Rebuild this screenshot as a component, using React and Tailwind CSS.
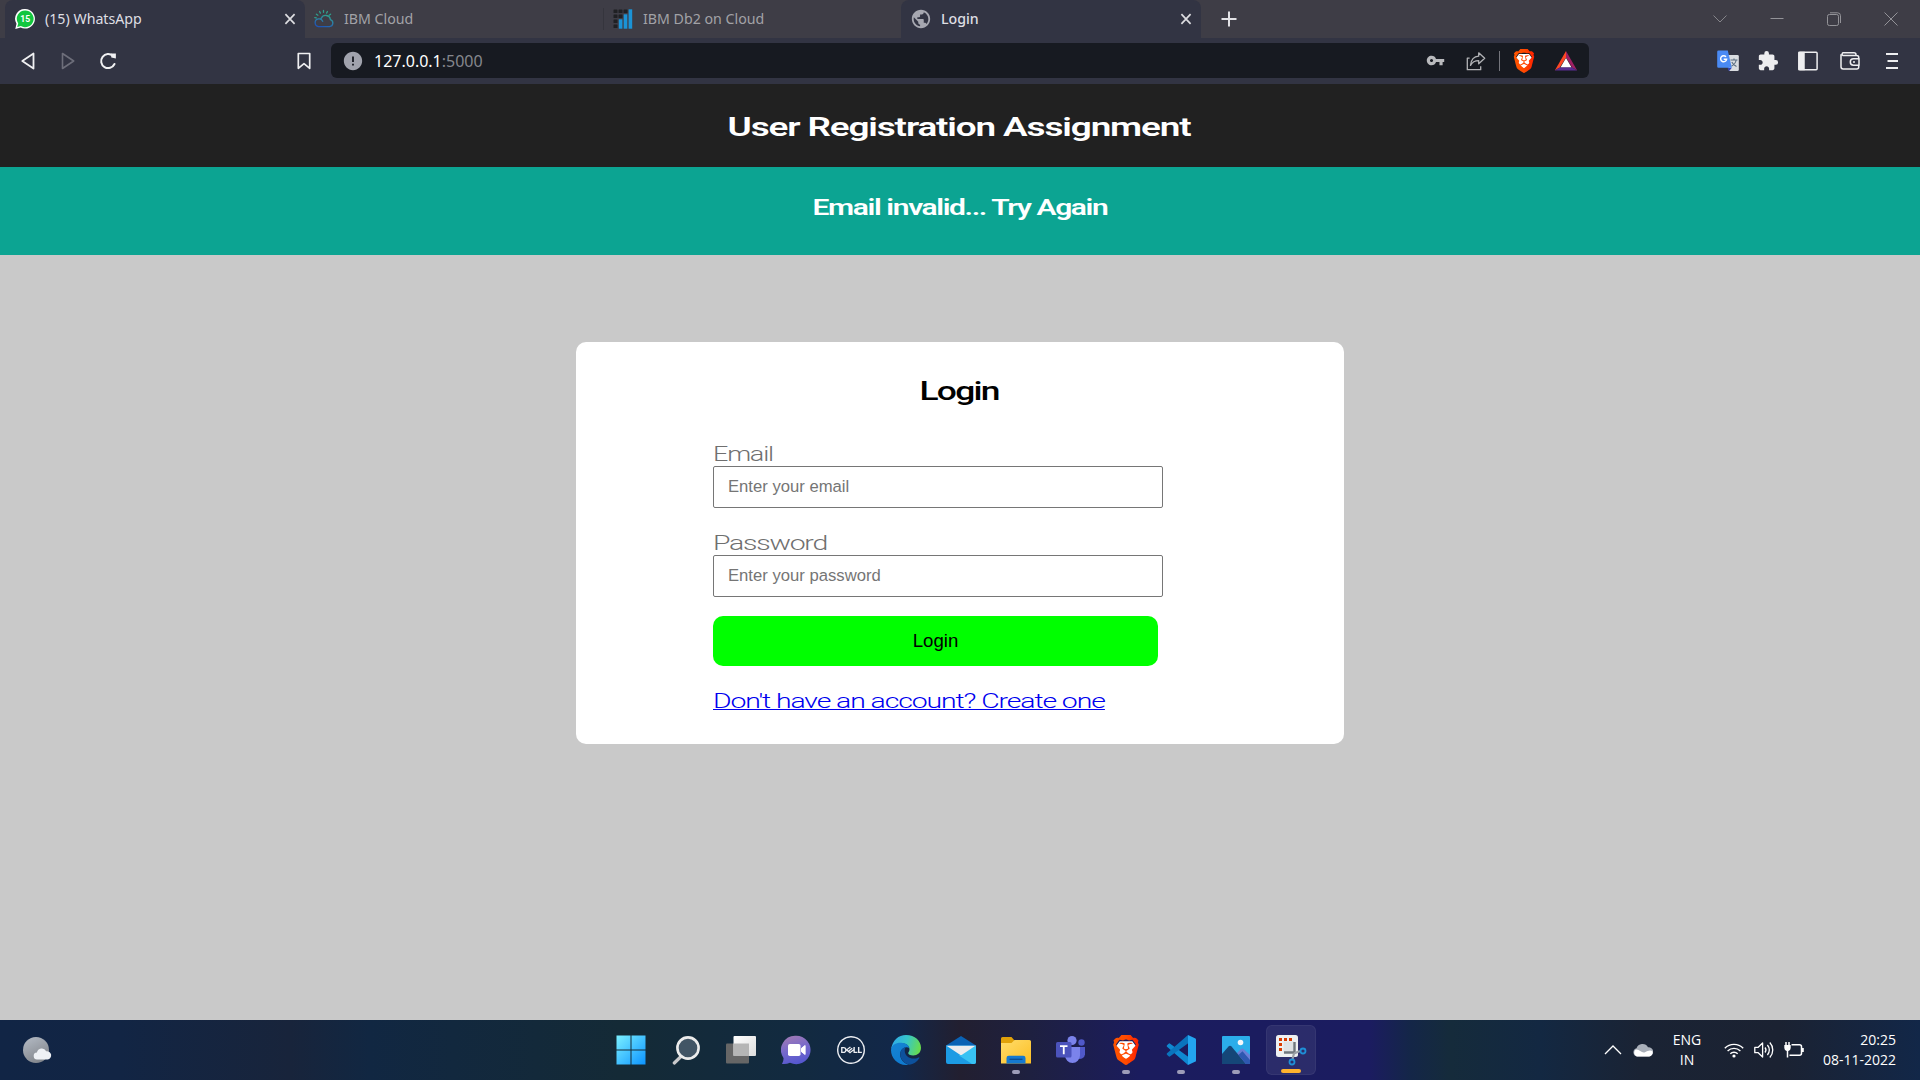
import { MdVpnKey, MdExtension, MdPublic, MdError } from "react-icons/md";
import { SiBrave, SiDell } from "react-icons/si";

/* ---------- shared ---------- */

function Cell({ className = "", children }) {
  return <div className={`flex shrink-0 items-center justify-center ${className}`}>{children}</div>;
}

function BraveLion({ id, className }) {
  return (
    <span className={`relative block ${className}`}>
      <svg viewBox="0 0 24 24" className="h-full w-full">
        <path d="M7 5h10l3 4-2 8-6 5-6-5-2-8z" fill="#fff" />
      </svg>
      <SiBrave className="absolute inset-0 h-full w-full" style={{ fill: `url(#${id})` }} />
      <svg className="absolute h-0 w-0">
        <defs>
          <linearGradient id={id} x1="0" x2="1" y1="0" y2="0">
            <stop offset="0" stopColor="#ff5500" />
            <stop offset="0.5" stopColor="#ff4a00" />
            <stop offset="1" stopColor="#ff2000" />
          </linearGradient>
        </defs>
      </svg>
    </span>
  );
}

/* ---------- browser chrome ---------- */

function WhatsAppIcon() {
  return (
    <svg viewBox="0 0 20 20" className="h-5 w-5">
      <path d="M10.2 0a9.8 9.8 0 1 1-4.6 18.5L0.3 20l1.2-5.2A9.8 9.8 0 0 1 10.2 0z" fill="#fff" />
      <path d="M10.2 1.4a8.4 8.4 0 1 1-4.3 15.6L2.2 18l1-3.6A8.4 8.4 0 0 1 10.2 1.4z" fill="#12c63f" />
      <text x="10.2" y="13.2" textAnchor="middle" fontSize="8.6" fontWeight="700" fill="#fff" fontFamily="Roboto, sans-serif">15</text>
    </svg>
  );
}

function CloudIcon() {
  return (
    <svg viewBox="0 0 20 20" className="h-5 w-5" fill="none" strokeWidth="1.3" strokeLinecap="round">
      <defs>
        <linearGradient id="ibmc" x1="0.8" y1="0" x2="0.3" y2="1">
          <stop offset="0" stopColor="#2fa08c" />
          <stop offset="0.5" stopColor="#2b7fa8" />
          <stop offset="1" stopColor="#1f55b5" />
        </linearGradient>
      </defs>
      <path d="M4.500 17.600h11a3.600 3.600 0 0 0 .9-7A4.800 4.800 0 0 0 7.300 9.200 4.800 4.800 0 0 0 6.500 10.300M4.500 17.600A3.900 3.900 0 1 1 8.700 12.400" stroke="url(#ibmc)" />
      <path d="M9.500 1.500v1.800M5.600 2.500l.8 1.600M13.400 2.500l-.8 1.600M2.400 5.200l1.500 1M16.600 5.200l-1.500 1M.8 8.700l1.500.2" stroke="#2fa08c" />
    </svg>
  );
}

function Db2Icon() {
  return (
    <svg viewBox="0 0 20 20" className="h-5 w-5">
      <g fill="#1f2023">
        {[[0.5, 0.5], [5.5, 0.5], [10.5, 0.5], [0.5, 5.5], [5.5, 5.5], [0.5, 10.5], [0.5, 15.5]].map(([x, y]) => (
          <rect key={`${x}-${y}`} x={x} y={y} width="4" height="3.6" rx="0.6" />
        ))}
      </g>
      <g fill="#1b93d6">
        <rect x="5.8" y="10.3" width="3.6" height="9.4" />
        <rect x="10.7" y="5.3" width="3.6" height="14.4" />
        <rect x="15.6" y="0.3" width="3.6" height="19.4" />
      </g>
    </svg>
  );
}

function CloseMark() {
  return (
    <svg viewBox="0 0 12 12" className="h-3 w-3" stroke="#dcdce0" strokeWidth="1.7">
      <path d="M1.4 1.200l9.200 9.600M10.600 1.200L1.400 10.800" />
    </svg>
  );
}

function Tab({ icon, title, active, closable, width, pad = "pl-2.5" }) {
  return (
    <div className={`flex h-[38px] shrink-0 items-center pr-[9px] ${pad} ${width} ${active ? "rounded-t-lg bg-[#323443]" : ""}`}>
      <span className="flex h-5 w-5 items-center justify-center">{icon}</span>
      <span className={`ml-2.5 flex-1 text-[14.2px] leading-5 ${active ? "text-[#dfdfe3]" : "text-[#a2a2a7]"}`}>{title}</span>
      {closable && <CloseMark />}
    </div>
  );
}

function TabStrip() {
  return (
    <div className="flex h-[38px] bg-[#3e3d46] pl-[5px]">
      <Tab width="w-[300px]" icon={<WhatsAppIcon />} title="(15) WhatsApp" active closable />
      <Tab width="w-[298px]" pad="pl-[9px]" icon={<CloudIcon />} title="IBM Cloud" />
      <div className="my-2 w-px bg-[#35353d]" />
      <Tab width="w-[297px]" pad="pl-[9px]" icon={<Db2Icon />} title="IBM Db2 on Cloud" />
      <Tab
        width="w-[300px]"
        icon={<MdPublic className="h-[22px] w-[22px] shrink-0 text-[#a6a7b0]" />}
        title={<span className="font-medium">Login</span>}
        active
        closable
      />
      <Cell className="w-14">
        <svg viewBox="0 0 16 16" className="h-4 w-4" stroke="#e2e2e6" strokeWidth="2">
          <path d="M8 .5v15M.5 8h15" />
        </svg>
      </Cell>
      <div className="ml-auto flex pr-px">
        <Cell className="w-[57px]">
          <svg viewBox="0 0 14 14" className="h-3.5 w-3.5" fill="none" stroke="#85858a"><path d="M.5 3.500L7 10l6.500-6.500" /></svg>
        </Cell>
        <Cell className="w-[57px]">
          <svg viewBox="0 0 14 14" className="h-3.5 w-3.5" stroke="#939398"><path d="M.5 6.500h13" /></svg>
        </Cell>
        <Cell className="w-[57px]">
          <svg viewBox="0 0 14 14" className="h-3.5 w-3.5" fill="none" stroke="#939398">
            <rect x="0.5" y="2.5" width="11" height="11" rx="1.8" />
            <path d="M3 .8h7.500a3 3 0 0 1 3 3V11" />
          </svg>
        </Cell>
        <Cell className="w-[57px]">
          <svg viewBox="0 0 14 14" className="h-3.5 w-3.5" stroke="#939398"><path d="M.5.500l13 13M13.500.500l-13 13" /></svg>
        </Cell>
      </div>
    </div>
  );
}

function AddressBar() {
  return (
    <div className="flex h-[35px] w-[1258px] shrink-0 items-center rounded-md bg-[#171a21]">
      <Cell className="ml-3 w-5"><MdError className="h-[22px] w-[22px] shrink-0 text-[#a1a3ad]" /></Cell>
      <span className="ml-[11px] text-[16px] leading-6 text-white">
        127.0.0.1<span className="text-[#85878d]">:5000</span>
      </span>
      <div className="ml-auto flex items-center">
        <Cell className="mr-px w-10"><MdVpnKey className="h-[19px] w-[19px] text-[#b9babd]" /></Cell>
        <Cell className="w-10">
          <svg viewBox="0 0 20 20" className="h-5 w-5" fill="none" stroke="#b2b3b6" strokeWidth="1.3" strokeLinejoin="round">
            <path d="M3.600 7.200H1.300v11.500h13.400v-3.400" />
            <path d="M12.700 1.800l6 5.500-6 5.400V9.600c-4 0-6.400 1.300-8.200 4.800.5-5 3.300-8.900 8.200-9.200z" />
          </svg>
        </Cell>
        <div className="ml-[3px] h-5 w-px bg-[#74757c]" />
        <Cell className="ml-1 w-10"><BraveLion id="brave-bar" className="h-6 w-6" /></Cell>
        <Cell className="mr-[3px] ml-[2px] w-10">
          <svg viewBox="0 0 24 20" className="h-5 w-6">
            <path d="M12 0L.8 19.500 6 16.200 12 6.500z" fill="#ff4724" />
            <path d="M12 0l11.200 19.500L18 16.200 12 6.500z" fill="#9e1f63" />
            <path d="M.8 19.500h22.400L18 16.200H6z" fill="#5a2d91" />
            <path d="M12 7l5.400 9.200H6.600z" fill="#fff" />
          </svg>
        </Cell>
      </div>
    </div>
  );
}

function Toolbar() {
  return (
    <div className="flex h-[46px] items-center bg-[#323443] pb-px">
      <Cell className="ml-2 w-10">
        <svg viewBox="0 0 16 18" className="h-[18px] w-4" fill="none" stroke="#f0f0f2" strokeWidth="1.8" strokeLinejoin="round"><path d="M13.500 1.500v15L2.300 9z" /></svg>
      </Cell>
      <Cell className="w-10">
        <svg viewBox="0 0 16 18" className="h-[18px] w-4" fill="none" stroke="#6d6e7a" strokeWidth="1.6" strokeLinejoin="round"><path d="M2.500 1.500v15L13.700 9z" /></svg>
      </Cell>
      <Cell className="w-10">
        <svg viewBox="0 0 18 18" className="h-[18px] w-[18px]" fill="none" stroke="#f0f0f2" strokeWidth="2" strokeLinecap="round">
          <path d="M15.500 12A7 7 0 1 1 14 4" />
          <path d="M12 1.600h4.900v4.900l-4.600-.9z" fill="#f0f0f2" stroke="none" />
        </svg>
      </Cell>
      <Cell className="mr-[7px] ml-auto w-10 flex-none">
        <svg viewBox="0 0 14 18" className="h-[18px] w-3.5" fill="none" stroke="#f0f0f2" strokeWidth="1.7" strokeLinejoin="round"><path d="M1.300 1.500h11.400v14.800L7 11.700l-5.700 4.600z" /></svg>
      </Cell>
      <AddressBar />
      <div className="flex w-[331px] shrink-0 items-center pl-[119px]">
        <Cell className="w-10">
          <svg viewBox="0 0 22 22" className="h-[22px] w-[22px]">
            <path d="M10 5h10.500a1.300 1.300 0 0 1 1.300 1.300v13.500a1.300 1.300 0 0 1-1.300 1.300H12z" fill="#d9dce0" />
            <path d="M13.500 10h7M17 8.500V10M19.200 10c-.6 3-2.500 5-4.800 6.200M14.800 12c1 2 2.500 3.500 4.700 4.400" stroke="#5a6d80" strokeWidth="1.100" fill="none" />
            <path d="M10.500 17.800h4.300L12 21.200z" fill="#3040b5" />
            <path d="M1.500.5h9.300l4 17.300H1.500A1.300 1.300 0 0 1 .2 16.500V1.800A1.300 1.300 0 0 1 1.500.5z" fill="#4a8af4" />
            <path d="M9 6.900A3 3 0 1 0 9.600 9.300H6.700" fill="none" stroke="#fff" strokeWidth="1.400" />
          </svg>
        </Cell>
        <Cell className="w-10"><MdExtension className="h-[22px] w-[22px] text-[#eeeef0]" /></Cell>
        <Cell className="w-10">
          <svg viewBox="0 0 20 20" className="h-5 w-5" fill="none" stroke="#eeeef0" strokeWidth="1.500">
            <rect x=".9" y="1.200" width="18.200" height="17.600" rx="1" />
            <path d="M1 1.500h5v17H1z" fill="#eeeef0" />
          </svg>
        </Cell>
        <Cell className="ml-px w-[42px]">
          <svg viewBox="0 0 20 18" className="h-[18px] w-5" fill="none" stroke="#eeeef0" strokeWidth="1.500" strokeLinejoin="round">
            <path d="M18.700 6.800V5.500a2 2 0 0 0-2-2H2.800a1.700 1.700 0 0 1 0-2.700H14a2 2 0 0 1 2 2v.6M1 2.200v12.600a2.200 2.200 0 0 0 2.200 2.200h13.500a2 2 0 0 0 2-2v-1.600" />
            <path d="M19 6.800h-5.500a3.200 3.200 0 0 0 0 6.400H19zM13 10h2" />
          </svg>
        </Cell>
        <Cell className="w-[42px]">
          <svg viewBox="0 0 12 18" className="h-[18px] w-3" stroke="#eeeef0" strokeWidth="1.800"><path d="M0 2h12M1.500 9H12M0 16h12" /></svg>
        </Cell>
      </div>
    </div>
  );
}

/* ---------- web page ---------- */

const wide = "block whitespace-nowrap font-['Roboto',sans-serif]";

function Field({ label, children }) {
  return (
    <div className="flex flex-col">
      <label className="flex h-6 text-[20px] leading-6 font-light text-[#6f6f6f]">{label}</label>
      {children}
    </div>
  );
}

const inputClass =
  "h-[42px] w-[450px] rounded-[2px] border border-[#767676] bg-white px-[14px] pb-px font-['Liberation_Sans',Arial,sans-serif] text-[16.67px] placeholder:text-[#757575] outline-none";

function Page() {
  return (
    <main className="flex flex-1 flex-col items-center bg-[#c9c9c9]">
      <header className="flex h-[83px] w-full justify-center bg-[#212121] pt-[27px] pr-0.5 leading-8 text-white">
        <h1 className={`${wide} origin-center scale-x-[1.42] text-[26px] font-semibold tracking-[-0.8px]`}>User Registration Assignment</h1>
      </header>
      <div className="flex h-[88px] w-full justify-center bg-[#0ca492] pt-[27px] leading-7 text-white">
        <h2 className={`${wide} origin-center scale-x-[1.365] text-[22px] font-semibold tracking-[-1.03px]`}>Email invalid... Try Again</h2>
      </div>
      <form className="mt-[87px] h-[402px] w-[768px] rounded-[10px] bg-white pt-[33px]" onSubmit={(e) => e.preventDefault()}>
        <div className="flex justify-center pr-0.5 leading-8 text-black">
          <h2 className={`${wide} origin-center scale-x-[1.36] text-[26px] font-medium tracking-[-1.3px]`}>Login</h2>
        </div>
        <div className="mt-[35px] ml-[137px] flex flex-col items-start">
          <Field label={<span className={`${wide} origin-left scale-x-[1.35] tracking-[-0.9px]`}>Email</span>}>
            <input type="text" placeholder="Enter your email" className={inputClass} />
          </Field>
          <div className="h-[23px]" />
          <Field label={<span className={`${wide} origin-left scale-x-[1.42] tracking-[-0.86px]`}>Password</span>}>
            <input type="password" placeholder="Enter your password" className={inputClass} />
          </Field>
          <button className="mt-[19px] h-[50px] w-[445px] rounded-[10px] bg-[#00ff00] pb-px font-['Liberation_Sans',Arial,sans-serif] text-[18.67px] text-black">Login</button>
          <a href="#create" className="mt-[23px] flex h-6 items-start text-[20px] leading-6 font-light text-[#0000ee]">
            <span className={`${wide} h-[21px] origin-left scale-x-[1.42] border-b border-[#0000ee] tracking-[-0.78px]`}>Don't have an account? Create one</span>
          </a>
        </div>
      </form>
    </main>
  );
}

/* ---------- taskbar ---------- */

const WindowsIcon = () => (
  <svg viewBox="0 0 30 30" className="h-[30px] w-[30px]">
    <defs>
      <linearGradient id="win" x1="0" y1="0" x2="30" y2="30" gradientUnits="userSpaceOnUse">
        <stop offset="0" stopColor="#7df2ff" />
        <stop offset="1" stopColor="#0a92ff" />
      </linearGradient>
    </defs>
    <path d="M.500.500h14v14h-14zM15.500.500h14v14h-14zM.500 15.500h14v14h-14zM15.500 15.500h14v14h-14z" fill="url(#win)" />
  </svg>
);

const SearchIcon = () => (
  <svg viewBox="0 0 30 30" className="h-[30px] w-[30px]">
    <path d="M10 21.500L3.300 28" stroke="#c9c9cb" strokeWidth="3.200" strokeLinecap="round" />
    <circle cx="17" cy="13" r="10.600" fill="#425565" stroke="#ececec" strokeWidth="2.600" />
  </svg>
);

const TaskViewIcon = () => (
  <svg viewBox="0 0 30 30" className="h-[30px] w-[30px]">
    <defs>
      <linearGradient id="tv" x1="0" y1="0" x2="1" y2="1"><stop offset="0" stopColor="#fff" /><stop offset="1" stopColor="#dcdcdc" /></linearGradient>
    </defs>
    <rect x="0" y="8.500" width="23" height="20" rx="1" fill="#666" />
    <rect x="7.500" y="1" width="22.500" height="20" rx="1" fill="url(#tv)" />
    <rect x="7.500" y="8.500" width="15.500" height="12.500" fill="#b5b5b5" />
  </svg>
);

const ChatIcon = () => (
  <svg viewBox="0 0 30 30" className="h-[30px] w-[30px]">
    <defs>
      <linearGradient id="ch" x1="0.200" y1="0" x2="0.500" y2="1"><stop offset="0" stopColor="#a27ab4" /><stop offset="0.500" stopColor="#7669cb" /><stop offset="1" stopColor="#5557cf" /></linearGradient>
    </defs>
    <path d="M15 .8a14.200 14.200 0 1 1-6 26.900Q5.500 29.500 1 29q1.800-3 1.500-6A14.200 14.200 0 0 1 15 .8z" fill="url(#ch)" />
    <rect x="7" y="9" width="12.500" height="12" rx="1.800" fill="#fff" />
    <path d="M20.500 13.200l3.600-2.700v9l-3.600-2.700z" fill="#fff" stroke="#fff" strokeLinejoin="round" />
  </svg>
);

const EdgeIcon = () => (
  <svg viewBox="0 0 30 30" className="h-[30px] w-[30px]">
    <defs>
      <linearGradient id="e1" x1="0" y1="0.300" x2="1" y2="0.500"><stop offset="0" stopColor="#2fa8ea" /><stop offset="0.500" stopColor="#36c6c9" /><stop offset="1" stopColor="#68dc4d" /></linearGradient>
      <linearGradient id="e2" x1="0" y1="0" x2="0.500" y2="1"><stop offset="0" stopColor="#1584d3" /><stop offset="1" stopColor="#0f7bd0" /></linearGradient>
    </defs>
    <path d="M0 14.500C1.500 5 7.500 0 15 0c9 0 15 6 15 12.800 0 5-3.700 7.700-7.800 7.700-3.200 0-5-1.200-5-2.400 0-.8 1.300-1.500 1.300-3.600 0-3.500-3-6.300-7.500-6.300C5.500 8.200 1.500 11 0 14.500z" fill="url(#e1)" />
    <path d="M0 15C.5 10 5 7.500 10.500 7.800c4 .3 7 2 7.900 5.200-3-1.500-7-.3-8.600 3.300-2.300 5.700 2 12.300 8 13.400C8 31.500 0 24 0 15z" fill="url(#e2)" />
    <path d="M9.800 16.300c1-2.600 3-3.900 5-4-1.700 1.900-1.500 6.600 1.700 9.200 3.200 2.700 7.600 2.600 11 .9.700-.4 1.100.2.800.8-2.300 3.700-6 6-9.800 6.500C12 28.600 7.800 22 9.800 16.300z" fill="#0d519c" />
  </svg>
);

const MailIcon = () => (
  <svg viewBox="0 0 32 30" className="h-[30px] w-8">
    <path d="M1 10.500L16 1l15 9.500v4H1z" fill="#0a62b4" />
    <path d="M1 10.500h30V27a2 2 0 0 1-2 2H3a2 2 0 0 1-2-2z" fill="#1c9be4" />
    <path d="M31 10.500V27a2 2 0 0 1-2 2h-2L14 20.500z" fill="#38c2f3" />
    <path d="M1.500 10.800h29L17 19.700a2 2 0 0 1-2 0z" fill="#ececee" />
  </svg>
);

const FolderIcon = () => (
  <svg viewBox="0 0 30 30" className="h-[30px] w-[30px]">
    <defs>
      <linearGradient id="fo" x1="0" y1="0" x2="1" y2="1"><stop offset="0" stopColor="#ffdc6b" /><stop offset="1" stopColor="#fcbf24" /></linearGradient>
    </defs>
    <path d="M0 3.500A1.500 1.500 0 0 1 1.500 2h9l3 3.500V10H0z" fill="#e0a10a" />
    <path d="M0 8h10.500l3-3H28.500A1.500 1.500 0 0 1 30 6.500V28.500H0z" fill="url(#fo)" />
    <path d="M5.500 28.500V23A2.300 2.300 0 0 1 7.800 20.700h14.400a2.300 2.300 0 0 1 2.300 2.300v5.500z" fill="#1579d0" />
    <path d="M8.500 24.300h13" stroke="#0c4d91" strokeWidth="1.300" />
  </svg>
);

const TeamsIcon = () => (
  <svg viewBox="0 0 30 30" className="h-[30px] w-[30px]">
    <circle cx="25.500" cy="7.500" r="3.200" fill="#5059c9" />
    <circle cx="16" cy="5.500" r="4.600" fill="#7b83eb" />
    <path d="M21 12h8v7.500a5 5 0 0 1-8 3.500z" fill="#5059c9" />
    <path d="M9 12h15v8.500a7.500 7.500 0 0 1-15 0z" fill="#7b83eb" />
    <rect x="0" y="7" width="15.500" height="15.500" rx="1.500" fill="#4b53bc" />
    <path d="M4 11.200h7.500M7.750 11.200v8" stroke="#fff" strokeWidth="1.800" />
  </svg>
);

const CodeIcon = () => (
  <svg viewBox="0 0 30 30" className="h-[30px] w-[30px]">
    <path d="M22 30L1 11.800a1.200 1.200 0 0 1 0-1.600L2.600 8.700a1.200 1.200 0 0 1 1.600 0L22.500 22z" fill="#0f88d1" />
    <path d="M22 0L1 18.200a1.200 1.200 0 0 0 0 1.600l1.600 1.500a1.200 1.200 0 0 0 1.600 0L22.500 8z" fill="#0a74bd" />
    <path d="M22 0l7 3.200a1.500 1.500 0 0 1 1 1.400v20.800a1.500 1.500 0 0 1-1 1.400L22 30z" fill="#23a5f0" />
  </svg>
);

const PhotosIcon = () => (
  <svg viewBox="0 0 30 30" className="h-[30px] w-[30px]">
    <rect x="1" y="1" width="28" height="28" rx="1" fill="#2badea" />
    <path d="M14 20l6-6a2 2 0 0 1 2.500 0L29 20v9H14z" fill="#6a7fd6" />
    <path d="M1 19l6.500-7.500a2 2 0 0 1 3 0L25 29H1z" fill="#154678" />
    <path d="M17.500 20l4-3.700L29 25v4h-4z" fill="#2e58b0" />
    <circle cx="19.500" cy="7.500" r="2.800" fill="#f4f8fb" />
  </svg>
);

const SnipIcon = () => (
  <svg viewBox="0 0 32 32" className="h-8 w-8">
    <rect x="1" y="1" width="22" height="22" rx="2.500" fill="#eef0f1" />
    <path d="M8.500 7.500H19v11.500H8.500z" fill="#dfe2e4" />
    <path d="M9 18.500h10.500V8" fill="none" stroke="#70777d" strokeWidth="2.400" />
    <g fill="#d83b01">
      <path d="M4 4h3v3H4zM9 4h3v3H9zM14 4h3v3h-3zM4 9h3v3H4zM4 14h3v3H4z" />
    </g>
    <path d="M19 19.500l6-2.500M19 19.500L17.500 25" stroke="#9aa0a5" strokeWidth="2.200" />
    <circle cx="28" cy="17" r="2.500" fill="none" stroke="#1f8fd6" strokeWidth="1.800" />
    <circle cx="17" cy="28" r="2.500" fill="none" stroke="#1f8fd6" strokeWidth="1.800" />
  </svg>
);

const apps = [
  { name: "start", icon: <WindowsIcon /> },
  { name: "search", icon: <SearchIcon /> },
  { name: "tasks", icon: <TaskViewIcon /> },
  { name: "chat", icon: <ChatIcon /> },
  { name: "dell", icon: <SiDell className="h-7 w-7 text-[#eceef2]" /> },
  { name: "edge", icon: <EdgeIcon /> },
  { name: "mail", icon: <MailIcon /> },
  { name: "files", icon: <FolderIcon />, mark: "w-2 bg-[#9d9cb8]" },
  { name: "teams", icon: <TeamsIcon /> },
  { name: "brave", icon: <BraveLion id="brave-task" className="h-[30px] w-[30px]" />, mark: "w-2 bg-[#9d9cb8]" },
  { name: "code", icon: <CodeIcon />, mark: "w-2 bg-[#9d9cb8]" },
  { name: "photos", icon: <PhotosIcon />, mark: "w-2 bg-[#9d9cb8]" },
  { name: "snip", icon: <SnipIcon />, mark: "w-5 bg-[#ffb22e]", current: true },
];

function Taskbar() {
  return (
    <footer className="flex h-[60px] items-center bg-[linear-gradient(90deg,#112545_0px,#122544_120px,#18243b_290px,#112742_370px,#142a36_620px,#122a40_800px,#122749_900px,#221f30_960px,#1e2040_1030px,#1b1c5e_1140px,#1b1c60_1370px,#142648_1410px,#152b3b_1450px,#132842_1540px,#1a2334_1640px,#1b2232_1780px,#122748_1920px)] font-['Open_Sans','Noto_Sans',sans-serif] text-white">
      <div className="w-[603px] shrink-0 pl-[22px]">
        <svg viewBox="0 0 30 28" className="h-7 w-[30px]">
          <defs>
            <linearGradient id="moon" x1="0" y1="0" x2="0.500" y2="1"><stop offset="0" stopColor="#b5bcc6" /><stop offset="1" stopColor="#84888e" /></linearGradient>
          </defs>
          <circle cx="14" cy="14" r="13" fill="url(#moon)" />
          <path d="M15.500 23.500a3.500 3.500 0 0 1-.6-7 5 5 0 0 1 9.300-1.300 4.200 4.200 0 0 1 1.500 8.300z" fill="#eef1f5" />
        </svg>
      </div>
      <div className="flex">
        {apps.map((a) => (
          <div key={a.name} className="flex h-[60px] w-[55px] items-center justify-center">
            <div className={`relative flex h-[50px] w-[50px] items-center justify-center rounded-md ${a.current ? "border border-white/5 bg-white/[0.07]" : ""}`}>
              {a.icon}
              {a.mark && <span className={`absolute bottom-px left-1/2 h-1 -translate-x-1/2 rounded-full ${a.mark}`} />}
            </div>
          </div>
        ))}
      </div>
      <div className="ml-auto flex items-center">
        <Cell className="w-8">
          <svg viewBox="0 0 18 10" className="h-2.5 w-[18px]" fill="none" stroke="#fff" strokeWidth="1.300"><path d="M1 9l8-8 8 8" /></svg>
        </Cell>
        <Cell className="w-7">
          <svg viewBox="0 0 20 14" className="h-3.5 w-5">
            <path d="M4 13.500A4.200 4.200 0 0 1 3.500 5.300 6.300 6.300 0 0 1 15 4.200a4.500 4.500 0 0 1 1 9.300z" fill="#a9afb9" />
            <path d="M3.800 13.500A4 4 0 0 1 2.500 6.800C6 5.500 9 11 12 9.200c3-1.600 5.500-2.500 7.600-.7a4.300 4.300 0 0 1-3.400 5z" fill="#fff" />
          </svg>
        </Cell>
        <div className="w-[60px] text-center text-[14px] leading-5">ENG<br />IN</div>
        <Cell className="ml-[2px] w-[30px]">
          <svg viewBox="0 0 20 16" className="h-4 w-5" fill="none" stroke="#fff" strokeWidth="1.400">
            <path d="M.8 6.200a13 13 0 0 1 18.400 0M3.600 9a9 9 0 0 1 12.800 0M6.300 11.800a5.200 5.200 0 0 1 7.400 0" />
            <circle cx="10" cy="14" r="1.600" fill="#fff" stroke="none" />
          </svg>
        </Cell>
        <Cell className="w-[30px]">
          <svg viewBox="0 0 20 18" className="h-[18px] w-5" fill="none" stroke="#fff" strokeWidth="1.300" strokeLinejoin="round">
            <path d="M.8 6.300h3.400L8.600 2v14l-4.400-4.300H.8z" />
            <path d="M11 6.500a4 4 0 0 1 0 5M13.400 4a7.500 7.500 0 0 1 0 10M15.800 1.500a11 11 0 0 1 0 15" />
          </svg>
        </Cell>
        <Cell className="w-[30px]">
          <svg viewBox="0 0 20 16" className="h-4 w-5" fill="none" stroke="#fff" strokeWidth="1.500">
            <path d="M7.500 2.800h8A2 2 0 0 1 17.500 4.800v6.400a2 2 0 0 1-2 2H5.500" />
            <path d="M18.800 6v4" strokeWidth="2" />
            <path d="M.3 3h6.400v3a3.200 3.200 0 0 1-2.400 3H2.700A3.200 3.200 0 0 1 .3 6z" fill="#fff" stroke="none" />
            <path d="M2 0v3M5 0v3M3.500 8v7.500" />
          </svg>
        </Cell>
        <div className="mr-6 ml-[15px] w-[72px] text-right text-[14px] leading-5 whitespace-nowrap"><span className="block">20:25</span><span className="-ml-2 block">08-11-2022</span></div>
      </div>
    </footer>
  );
}

export default function App() {
  return (
    <div className="flex h-[1080px] w-[1920px] flex-col overflow-hidden font-['Noto_Sans','Open_Sans',sans-serif]">
      <TabStrip />
      <Toolbar />
      <Page />
      <Taskbar />
    </div>
  );
}
